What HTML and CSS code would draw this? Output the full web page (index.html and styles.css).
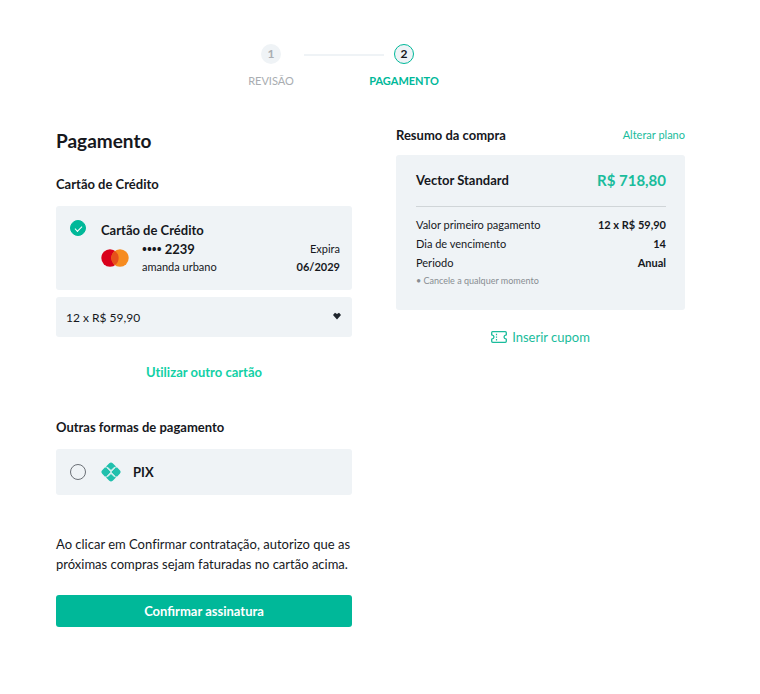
FILE: index.html
```html
<!DOCTYPE html>
<html lang="pt-BR">
<head>
    <meta charset="UTF-8">
    <meta name="viewport" content="width=device-width, initial-scale=1.0">
    <title>Pagamento</title>
    <link rel="stylesheet" href="styles.css">
</head>
<body>
    <ol class="steps">
        <li class="step">
            <span class="step-number">1</span>
            <span class="step-label">REVISÃO</span>
        </li>
        <li class="step-line" aria-hidden="true"></li>
        <li class="step active" aria-current="step">
            <span class="step-number">2</span>
            <span class="step-label">PAGAMENTO</span>
        </li>
    </ol>

    <main class="checkout">
        <form class="payment">
            <h1>Pagamento</h1>

            <h2>Cartão de Crédito</h2>
            <label class="method card-method">
                <input class="method-radio" type="radio" name="method" value="card" checked>
                <span class="card-info">
                    <strong class="card-title">Cartão de Crédito</strong>
                    <span class="card-row">
                        <svg class="card-brand" width="28" height="18" viewBox="0 0 28 18" aria-hidden="true">
                            <circle cx="9" cy="9" r="8.7" fill="#d9001b"/>
                            <circle cx="19" cy="9" r="8.7" fill="#f68b1f"/>
                            <path d="M14 1.9a8.7 8.7 0 0 1 0 14.2a8.7 8.7 0 0 1 0-14.2z" fill="#e6501b"/>
                        </svg>
                        <span class="card-owner">
                            <strong class="card-number"><span class="dots">••••</span> 2239</strong>
                            <span>amanda urbano</span>
                        </span>
                        <span class="card-expiry">
                            <span>Expira</span>
                            <strong>06/2029</strong>
                        </span>
                    </span>
                </span>
            </label>

            <div class="installments">
                <select aria-label="Parcelas">
                    <option>12 x R$ 59,90</option>
                </select>
                <svg class="select-arrow" width="8" height="8" viewBox="0 0 8 8" aria-hidden="true">
                    <path d="M0 3L2 .7L4 2L6 .7L8 3L4 7.4z" fill="#20262e"/>
                </svg>
            </div>

            <a class="other-card" href="#">Utilizar outro cartão</a>

            <h2>Outras formas de pagamento</h2>
            <label class="method pix-method">
                <input class="method-radio" type="radio" name="method" value="pix">
                <svg class="pix-icon" width="20" height="20" viewBox="0 0 20 20" aria-hidden="true">
                    <g fill="#20c0ad">
                        <path d="M4.8 4.7L8.3 1.2Q10 -.4 11.7 1.2L15.2 4.7H14.4Q13.4 4.7 12.7 5.4L10 8.1L7.3 5.4Q6.6 4.7 5.6 4.7z"/>
                        <path d="M4.8 15.3L8.3 18.8Q10 20.4 11.7 18.8L15.2 15.3H14.4Q13.4 15.3 12.7 14.6L10 11.9L7.3 14.6Q6.6 15.3 5.6 15.3z"/>
                        <path d="M3.8 5.4H5.5Q6.2 5.4 6.6 5.9L9.5 9Q10.2 10 9.5 11L6.6 14.1Q6.2 14.6 5.5 14.6H3.8L1.2 11.7Q-.4 10 1.2 8.3z"/>
                        <path d="M16.2 5.4H14.5Q13.8 5.4 13.4 5.9L10.5 9Q9.8 10 10.5 11L13.4 14.1Q13.8 14.6 14.5 14.6H16.2L18.8 11.7Q20.4 10 18.8 8.3z"/>
                    </g>
                    <path d="M6 6L14 14M14 6L6 14" stroke="#c5ebe8" stroke-width=".9"/>
                </svg>
                <strong>PIX</strong>
            </label>

            <p class="terms">Ao clicar em Confirmar contratação, autorizo que as próximas compras sejam faturadas no cartão acima.</p>
            <button class="confirm-btn" type="submit">Confirmar assinatura</button>
        </form>

        <aside class="summary">
            <div class="summary-header">
                <h2>Resumo da compra</h2>
                <a href="#">Alterar plano</a>
            </div>
            <div class="summary-card">
                <div class="plan">
                    <span class="plan-name">Vector Standard</span>
                    <span class="plan-price">R$ 718,80</span>
                </div>
                <dl class="details">
                    <div>
                        <dt>Valor primeiro pagamento</dt>
                        <dd>12 x R$ 59,90</dd>
                    </div>
                    <div>
                        <dt>Dia de vencimento</dt>
                        <dd>14</dd>
                    </div>
                    <div>
                        <dt>Periodo</dt>
                        <dd>Anual</dd>
                    </div>
                </dl>
                <p class="note">• Cancele a qualquer momento</p>
            </div>
            <button class="coupon-btn" type="button">
                <svg width="16" height="12" viewBox="0 0 16 12" fill="none" stroke="#1abc9c" aria-hidden="true">
                    <path d="M1.5 .7H14.3Q15.3 .7 15.3 1.7V3.8Q13 4.3 13 6T15.3 8.2V10.3Q15.3 11.3 14.3 11.3H1.7Q.7 11.3 .7 10.3V8.2Q3 7.7 3 6T.7 3.8V1.7Q.7 .7 1.5 .7z" stroke-width="1.3"/>
                    <path d="M5.5 2.8V4.2M5.5 5.4V6.8M5.5 8V9.4" stroke-width="1.2"/>
                </svg>
                Inserir cupom
            </button>
        </aside>
    </main>
</body>
</html>
```
FILE: styles.css
```css
* {
    box-sizing: border-box;
}

body {
    margin: 0;
    padding: 44px 0;
    background: #fff;
    color: #16181d;
    font-family: Lato, "Open Sans", sans-serif;
    font-size: 11px;
    line-height: 20px;
    font-variant-ligatures: none;
}

h1,
h2,
p,
dl,
dd {
    margin: 0;
}

h1 {
    font-size: 19px;
    line-height: 24px;
    font-weight: 700;
}

h2 {
    font-size: 13px;
    line-height: 20px;
    font-weight: 700;
}

strong {
    font-weight: 700;
}

a {
    color: #1abc9c;
    text-decoration: none;
}

button,
select {
    font-family: inherit;
    cursor: pointer;
}

/* Steps */
.steps {
    display: flex;
    justify-content: center;
    margin: 0 0 39px;
    padding: 0 85px 0 0;
    list-style: none;
}

.step {
    display: flex;
    flex-direction: column;
    align-items: center;
    gap: 8px;
    width: 40px;
    color: #a9adb1;
}

.step-number {
    width: 20px;
    height: 20px;
    border-radius: 50%;
    background: #eff3f6;
    font-size: 12px;
    font-weight: 700;
    text-align: center;
}

.step-label {
    font-size: 11px;
    line-height: 18px;
}

.step-line {
    width: 80px;
    height: 2px;
    margin: 10px 0 0 13px;
    background: #eff3f6;
}

.step.active {
    color: #00b899;
}

.step.active .step-number {
    border: 1px solid #00b899;
    color: #16181d;
    line-height: 18px;
}

.step.active .step-label {
    font-weight: 700;
}

/* Columns */
.checkout {
    display: grid;
    grid-template-columns: 296fr 289fr;
    align-items: start;
    gap: 44px;
    padding: 0 75px 0 56px;
}

.payment {
    display: flex;
    flex-direction: column;
}

.payment h1 {
    margin: 0 0 21px;
}

.payment h2 {
    margin-bottom: 12px;
}

/* Payment methods */
.method {
    display: flex;
    border-radius: 3px;
    background: #eff3f6;
    cursor: pointer;
}

.method-radio {
    appearance: none;
    flex: none;
    display: grid;
    place-items: center;
    width: 16px;
    height: 16px;
    margin: 0 15px 0 0;
    border: 1px solid #6b7076;
    border-radius: 50%;
}

.method-radio:checked {
    border-color: #00b899;
    background: #00b899;
}

.method-radio:checked::after {
    content: "";
    width: 6px;
    height: 3px;
    border: solid #fff;
    border-width: 0 0 1px 1px;
    transform: rotate(-45deg);
}

.card-method {
    padding: 14px 12px;
}

.card-method .method-radio {
    margin-left: 2px;
}

.card-info {
    flex: 1;
}

.card-title {
    display: block;
    font-size: 13px;
}

.card-row {
    display: flex;
    align-items: center;
}

.card-brand {
    margin-right: 13px;
}

.card-owner,
.card-expiry {
    display: flex;
    flex-direction: column;
    line-height: 18px;
}

.card-number {
    font-size: 13px;
}

.dots {
    font-family: "Noto Sans", sans-serif;
    line-height: 1;
}

.card-expiry {
    margin-left: auto;
    text-align: right;
}

.installments {
    position: relative;
    margin-top: 7px;
}

.installments select {
    appearance: none;
    width: 100%;
    height: 40px;
    padding: 0 30px 0 10px;
    border: 0;
    border-radius: 3px;
    background: #eff3f6;
    color: #16181d;
    font-size: 12px;
}

.select-arrow {
    position: absolute;
    top: 15px;
    right: 11px;
    pointer-events: none;
}

.other-card {
    align-self: center;
    margin: 25px 0 35px;
    color: #12d0a5;
    font-size: 13px;
    font-weight: 700;
}

.pix-method {
    align-items: center;
    padding: 13px 14px;
    font-size: 13px;
}

.pix-icon {
    margin-right: 12px;
}

.terms {
    margin: 39px 0 21px;
    font-size: 13px;
}

.confirm-btn {
    height: 32px;
    border: 0;
    border-radius: 3px;
    background: #00b899;
    color: #fff;
    font-size: 13px;
    font-weight: 700;
}

/* Summary */
.summary {
    display: flex;
    flex-direction: column;
}

.summary-header,
.plan,
.details div {
    display: flex;
    justify-content: space-between;
    align-items: center;
}

.summary-header {
    margin: -4px 0 10px;
}

.summary-card {
    padding: 14px 19px 20px 20px;
    border-radius: 3px;
    background: #eff3f6;
}

.plan {
    margin-bottom: 8px;
    padding-bottom: 14px;
    border-bottom: 1px solid #d0d5d8;
    font-size: 13px;
    line-height: 23px;
    font-weight: 700;
}

.plan-price {
    color: #1abc9c;
    font-size: 15px;
}

.details {
    line-height: 19px;
}

.details dd {
    font-weight: 700;
}

.note {
    color: #888d92;
    font-size: 9px;
    line-height: 18px;
}

.coupon-btn {
    display: flex;
    align-items: center;
    align-self: center;
    gap: 5px;
    margin-top: 17px;
    padding: 0;
    border: 0;
    background: none;
    color: #1abc9c;
    font-size: 13px;
    line-height: 20px;
}
```
